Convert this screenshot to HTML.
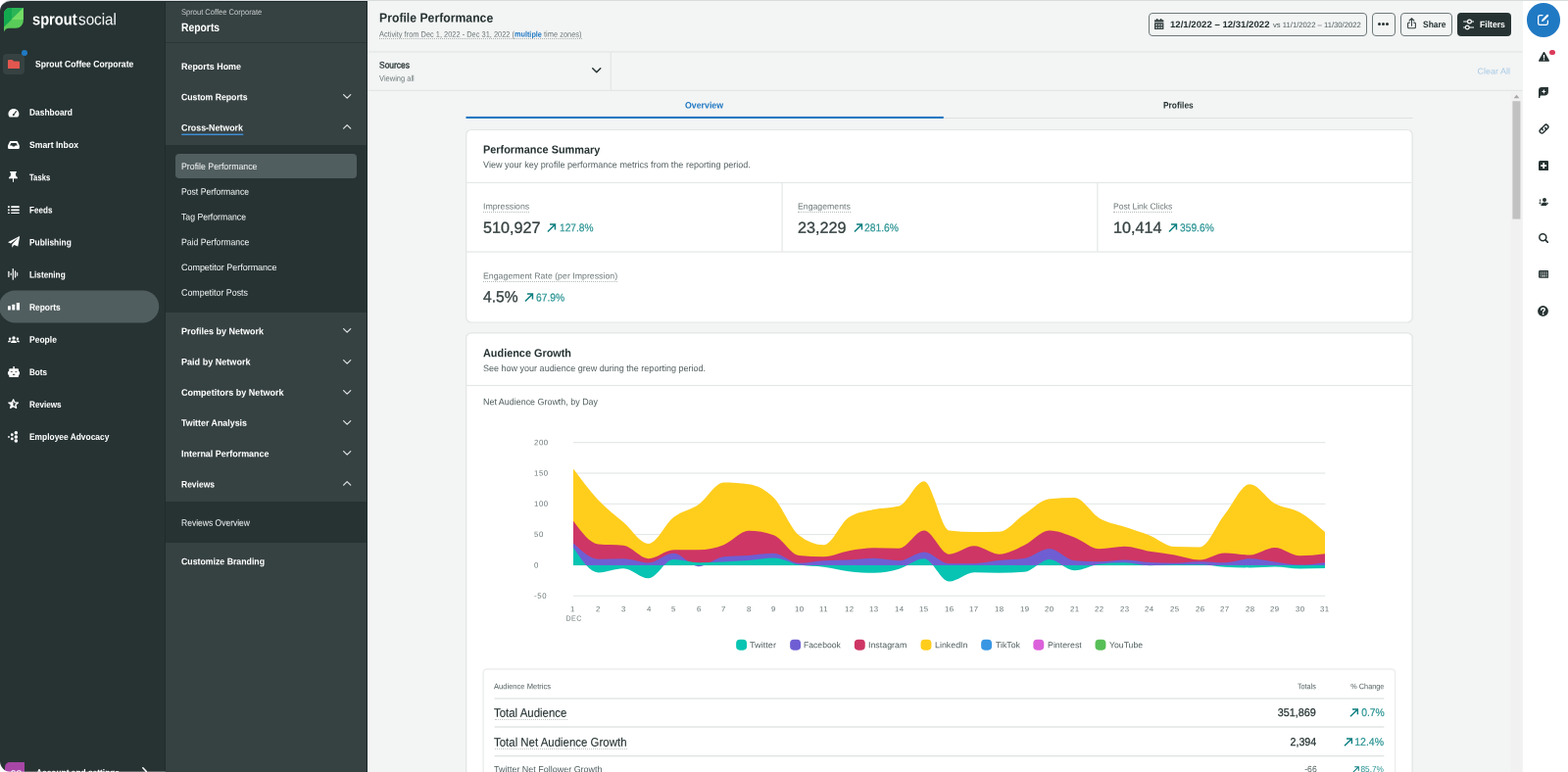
<!DOCTYPE html>
<html lang="en"><head><meta charset="utf-8"><title>Profile Performance - Sprout Social</title>
<style>
html,body{margin:0;padding:0;background:#fff;}
body{width:1600px;height:788px;overflow:hidden;font-family:"Liberation Sans",sans-serif;text-rendering:geometricPrecision;}
#app{position:absolute;left:0;top:0;width:1600px;height:788px;overflow:hidden;border-radius:11px 0 0 11px;border-top:1px solid #d9dcdc;box-sizing:border-box;}
#in{will-change:transform;position:absolute;left:0;top:-1px;width:1600px;height:788px;}
#in nav,#in main,#in aside,#in section{display:contents;}
#in div,#in span,#in svg{position:absolute;display:block;}
#in span{white-space:nowrap;}
</style></head><body>
<div id="app"><div id="in">
<nav aria-label="Primary">
<div style="left:0px;top:0px;width:169px;height:788px;background:#273333;"></div>
<div style="left:168px;top:0px;width:1px;height:788px;background:#212b2c;"></div>
<svg style="left:3.9px;top:8px" width="19.8" height="24.5" viewBox="0 0 20 24.5"><path d="M6.500 0H20V13C20 17.400 16.600 20.800 12.200 20.800H5.400C2.700 20.800 0.900 22.300 0 24.500V6.500C0 2.900 2.900 0 6.500 0Z" fill="#59cb59"/><path d="M6.500 0H20L0 19.500V6.500C0 2.900 2.900 0 6.500 0Z" fill="#2bb656"/><path d="M6.500 0H8L8 11.700L0 19.500V6.500C0 2.900 2.900 0 6.500 0Z" fill="#13a94f"/><path d="M20 0V12H7.700Z" fill="#75dd66"/></svg>
<span style="top:9px;font-size:16.5px;line-height:22px;color:#fff;font-weight:700;left:33.20px;transform-origin:0 50%;transform:matrix(0.8881,0.0005,0,1,0,0.27);">sprout</span>
<span style="top:9px;font-size:16.5px;line-height:22px;color:#f4f5f5;left:80.00px;transform-origin:0 50%;transform:matrix(0.9244,0.0005,0,1,0,0.27);">social</span>
<div style="left:3px;top:54.5px;width:22px;height:21.5px;background:#364141;border-radius:4px;"></div>
<svg style="left:7.8px;top:60.7px" width="12" height="9.5" viewBox="0 0 12 9.5"><path d="M1.2 0H4.6L6 1.4H10.8C11.5 1.4 12 1.9 12 2.6V8.3C12 9 11.5 9.5 10.8 9.5H1.2C0.5 9.5 0 9 0 8.3V1.2C0 0.5 0.5 0 1.2 0Z" fill="#e2574f"/></svg>
<div style="left:21.5px;top:50.5px;width:6px;height:6px;background:#2079c3;border-radius:50%;"></div>
<span style="top:58px;font-size:9.5px;line-height:15px;color:#fff;font-weight:700;left:35.80px;transform-origin:0 50%;transform:matrix(0.9049,0.0005,0,1,0,0.56);">Sprout Coffee Corporate</span>
<svg style="left:0;top:290px" width="170" height="46" viewBox="0 290 170 46"><rect x="-1" y="296.4" width="163.2" height="33" rx="16.5" fill="#515e5f"/></svg>
<svg style="left:7.85px;top:110.70px;overflow:visible;" width="11.9" height="8.5" viewBox="0 0 12.6 9.8"><path d="M0.9 9.3C0.3 8.4 0 7.400 0 6.3C0 2.800 2.8 0 6.3 0S12.6 2.800 12.6 6.3C12.6 7.400 12.3 8.4 11.7 9.3C11.500 9.600 11.2 9.800 10.8 9.800H1.800C1.400 9.800 1.100 9.600 0.900 9.300Z" fill="#fff"/><path d="M9.200 3L6.600 6.700" stroke="#273333" stroke-width="1.200" stroke-linecap="round"/><circle cx="6.100" cy="7.100" r="1.150" fill="#273333"/></svg>
<span style="top:106px;font-size:9.4px;line-height:15px;color:#fff;font-weight:700;left:29.90px;transform-origin:0 50%;transform:matrix(0.8985,0.0005,0,1,0,0.83);">Dashboard</span>
<svg style="left:7.85px;top:143.85px;" width="11.9" height="8.1" viewBox="0 0 12.4 8.5"><path d="M3 0H9.400C9.900 0 10.300 0.300 10.500 0.700L12.200 4.400C12.300 4.700 12.400 5 12.400 5.300V7.200C12.400 7.900 11.800 8.500 11.100 8.500H1.300C0.600 8.500 0 7.900 0 7.200V5.300C0 5 0.100 4.700 0.200 4.400L1.900 0.700C2.100 0.300 2.500 0 3 0Z" fill="#fff"/><path d="M3.500 2.100H8.900L10.400 4.700H8L7.300 5.900H5.100L4.400 4.700H2Z" fill="#273333"/></svg>
<span style="top:140px;font-size:9.4px;line-height:15px;color:#fff;font-weight:700;left:29.90px;transform-origin:0 50%;transform:matrix(0.9227,0.0005,0,1,0,0.03);">Smart Inbox</span>
<svg style="left:9.10px;top:175.00px;" width="9" height="11.2" viewBox="0 0 9 11.2"><path d="M1.2 0H7.8V1.4H6.9L7.3 4.7C8.4 5.2 9 6.1 9 7.3H5V10.4L4.5 11.2L4 10.4V7.3H0C0 6.1 0.6 5.2 1.7 4.7L2.1 1.4H1.2Z" fill="#fff"/></svg>
<span style="top:173px;font-size:9.4px;line-height:15px;color:#fff;font-weight:700;left:29.90px;transform-origin:0 50%;transform:matrix(0.8188,0.0005,0,1,0,0.33);">Tasks</span>
<svg style="left:7.90px;top:209.65px;" width="11.8" height="8.7" viewBox="0 0 11.8 8.7"><rect x="0" y="0.3" width="1.8" height="1.7" rx="0.3" fill="#fff"/><rect x="3.2" y="0.35" width="8.6" height="1.6" rx="0.4" fill="#fff"/><rect x="0" y="3.5" width="1.8" height="1.7" rx="0.3" fill="#fff"/><rect x="3.2" y="3.55" width="8.6" height="1.6" rx="0.4" fill="#fff"/><rect x="0" y="6.7" width="1.8" height="1.7" rx="0.3" fill="#fff"/><rect x="3.2" y="6.75" width="8.6" height="1.6" rx="0.4" fill="#fff"/></svg>
<span style="top:206px;font-size:9.4px;line-height:15px;color:#fff;font-weight:700;left:29.90px;transform-origin:0 50%;transform:matrix(0.8632,0.0005,0,1,0,0.53);">Feeds</span>
<svg style="left:7.80px;top:241.25px;" width="12.2" height="11.7" viewBox="0 0 12.2 11.7"><path d="M12.2 0L10.3 10.6L6.4 8.9L4.3 11.7L4.3 8.4L10.6 1.6L3 7.5L0 6.3Z" fill="#fff"/></svg>
<span style="top:239px;font-size:9.4px;line-height:15px;color:#fff;font-weight:700;left:29.90px;transform-origin:0 50%;transform:matrix(0.8931,0.0005,0,1,0,0.43);">Publishing</span>
<svg style="left:8.20px;top:274.30px;" width="10.6" height="11.8" viewBox="0 0 10.6 11.8"><rect x="0.25" y="2.7" width="1.3" height="6.3999999999999995" rx="0.6" fill="#fff" opacity="0.95"/><rect x="2.5500000000000003" y="4.6" width="1.3" height="2.6000000000000005" rx="0.6" fill="#fff" opacity="0.8"/><rect x="4.6499999999999995" y="0" width="1.3" height="11.8" rx="0.6" fill="#fff" opacity="0.95"/><rect x="6.949999999999999" y="2.3" width="1.3" height="7.2" rx="0.6" fill="#fff" opacity="0.95"/><rect x="8.95" y="4" width="1.3" height="3.8" rx="0.6" fill="#fff" opacity="0.8"/></svg>
<span style="top:272px;font-size:9.4px;line-height:15px;color:#fff;font-weight:700;left:29.90px;transform-origin:0 50%;transform:matrix(0.8807,0.0005,0,1,0,0.43);">Listening</span>
<svg style="left:7.65px;top:309.40px;" width="12.1" height="7.6" viewBox="0 0 12.1 7.6"><rect x="0" y="3.3" width="2.9" height="4.3" rx="0.5" fill="#fff"/><rect x="4.3" y="1.7" width="2.9" height="5.9" rx="0.5" fill="#fff"/><rect x="8.8" y="0" width="3.3" height="7.6" rx="0.5" fill="#fff"/></svg>
<span style="top:305px;font-size:9.4px;line-height:15px;color:#fff;font-weight:700;left:29.90px;transform-origin:0 50%;transform:matrix(0.8949,0.0005,0,1,0,0.63);">Reports</span>
<svg style="left:7.70px;top:342.65px;" width="12" height="7.3" viewBox="0 0 12 7.3"><circle cx="6" cy="2" r="1.7" fill="#fff"/><circle cx="2.1" cy="2.8" r="1.2" fill="#fff"/><circle cx="9.9" cy="2.8" r="1.2" fill="#fff"/><path d="M3 7.3C3 5.4 4.2 4.3 6 4.3S9 5.4 9 7.3Z" fill="#fff"/><path d="M0 6.3C0 5 0.8 4.4 2.1 4.4C2.6 4.4 3 4.5 3.3 4.7C2.7 5.2 2.4 5.7 2.3 6.3Z" fill="#fff"/><path d="M12 6.3C12 5 11.2 4.4 9.9 4.4C9.4 4.4 9 4.5 8.7 4.7C9.3 5.2 9.6 5.7 9.7 6.3Z" fill="#fff"/></svg>
<span style="top:338px;font-size:9.4px;line-height:15px;color:#fff;font-weight:700;left:29.90px;transform-origin:0 50%;transform:matrix(0.9073,0.0005,0,1,0,0.83);">People</span>
<svg style="left:7.70px;top:374.30px;" width="12.2" height="11.2" viewBox="0 0 12.2 11.2"><rect x="5.4" y="0" width="1.4" height="3" fill="#fff"/><path d="M2.4 2.3H9.8C10.5 2.3 11 2.8 11 3.5V5.2H12.2V8.6H11V10C11 10.7 10.5 11.2 9.8 11.2H2.4C1.7 11.2 1.2 10.7 1.2 10V8.600H0V5.2H1.2V3.5C1.2 2.8 1.7 2.3 2.4 2.3Z" fill="#fff"/><rect x="2.7" y="5" width="2.2" height="1" rx="0.4" fill="#273333" opacity="0.75"/><rect x="7.3" y="5" width="2.2" height="1" rx="0.4" fill="#273333" opacity="0.75"/><rect x="4.9" y="7.8" width="2.4" height="1.2" rx="0.5" fill="#273333" opacity="0.8"/></svg>
<span style="top:371px;font-size:9.4px;line-height:15px;color:#fff;font-weight:700;left:29.90px;transform-origin:0 50%;transform:matrix(0.8636,0.0005,0,1,0,0.93);">Bots</span>
<svg style="left:7.95px;top:406.90px;" width="11.3" height="10.5" viewBox="0 0 11.6 11.4" preserveAspectRatio="none"><path d="M5.80,0.70L7.30,3.94L10.84,4.36L8.23,6.79L8.92,10.29L5.80,8.55L2.68,10.29L3.37,6.79L0.76,4.36L4.30,3.94Z" fill="#fff" stroke="#fff" stroke-width="1.1" stroke-linejoin="round"/><path d="M5.80,3.00L6.59,4.91L8.65,5.07L7.08,6.42L7.56,8.43L5.80,7.35Z" fill="#273333" stroke="#273333" stroke-width="0.3" stroke-linejoin="round"/></svg>
<span style="top:404px;font-size:9.4px;line-height:15px;color:#fff;font-weight:700;left:29.90px;transform-origin:0 50%;transform:matrix(0.8686,0.0005,0,1,0,0.93);">Reviews</span>
<svg style="left:8.35px;top:440.00px;" width="10.1" height="11.8" viewBox="0 0 10.1 11.8"><circle cx="8.3" cy="1.8" r="1.75" fill="#fff"/><circle cx="8.3" cy="5.9" r="1.75" fill="#fff"/><circle cx="8.3" cy="10" r="1.75" fill="#fff"/><circle cx="4.3" cy="3.8" r="1.45" fill="#fff"/><circle cx="4.3" cy="7.9" r="1.45" fill="#fff"/><circle cx="1" cy="5.9" r="0.95" fill="#fff"/></svg>
<span style="top:438px;font-size:9.4px;line-height:15px;color:#fff;font-weight:700;left:29.90px;transform-origin:0 50%;transform:matrix(0.8949,0.0005,0,1,0,0.03);">Employee Advocacy</span>
<div style="left:5px;top:778px;width:19.5px;height:20px;background:#a746a6;border-radius:5px 0 0 0;"></div>
<span style="top:782px;font-size:8.0px;line-height:13px;color:#fff;font-weight:700;left:11.00px;transform-origin:0 50%;transform:matrix(1.0000,0.0005,0,1,0,0.75);">SC</span>
<span style="top:780px;font-size:9.4px;line-height:15px;color:#fff;font-weight:700;left:37.00px;transform-origin:0 50%;transform:matrix(0.8917,0.0005,0,1,0,0.83);">Account and settings</span>
<svg style="left:145.20px;top:783.00px;overflow:visible;" width="5.2" height="9" viewBox="0 0 5.2 9"><path d="M0.8 0.8L4.4 4.5L0.8 8.2" fill="none" stroke="#fff" stroke-width="1.5" stroke-linecap="round" stroke-linejoin="round"/></svg>
<div style="left:0px;top:787px;width:375px;height:1px;background:rgba(255,255,255,0.28);"></div>
</nav>
<nav aria-label="Reports">
<div style="left:169px;top:0px;width:206px;height:788px;background:#364141;"></div>
<div style="left:169px;top:43px;width:206px;height:1px;background:#2a3636;"></div>
<div style="left:374px;top:0px;width:1px;height:788px;background:#1b2a2b;"></div>
<div style="left:0px;top:1px;width:375px;height:1px;background:#1d2b2c;"></div>
<span style="top:6px;font-size:8.2px;line-height:13px;color:#c8cccc;left:184.80px;transform-origin:0 50%;transform:matrix(0.9229,0.0005,0,1,0,0.02);">Sprout Coffee Corporate</span>
<span style="top:19px;font-size:12.0px;line-height:18px;color:#fff;font-weight:700;left:184.80px;transform-origin:0 50%;transform:matrix(0.8623,0.0005,0,1,0,0.02);">Reports</span>
<div style="left:169px;top:148px;width:205px;height:171px;background:#273333;"></div>
<div style="left:169px;top:512px;width:205px;height:42px;background:#273333;"></div>
<div style="left:179px;top:157px;width:185px;height:25px;background:#515e5f;border-radius:4px;"></div>
<span style="top:60px;font-size:9.4px;line-height:15px;color:#fff;font-weight:700;left:185.00px;transform-origin:0 50%;transform:matrix(0.9520,0.0005,0,1,0,0.03);">Reports Home</span>
<span style="top:91px;font-size:9.4px;line-height:15px;color:#fff;font-weight:700;left:185.00px;transform-origin:0 50%;transform:matrix(0.9256,0.0005,0,1,0,0.23);">Custom Reports</span>
<svg style="left:349.80px;top:96.30px;overflow:visible;" width="8.4" height="4.8" viewBox="0 0 8.4 4.8"><path d="M0.625 0.625L4.2 4.175L7.775 0.625" fill="none" stroke="#dfe2e2" stroke-width="1.25" stroke-linecap="round" stroke-linejoin="round"/></svg>
<span style="top:122px;font-size:9.4px;line-height:15px;color:#fff;font-weight:700;left:185.00px;transform-origin:0 50%;transform:matrix(0.9447,0.0005,0,1,0,0.43);">Cross-Network</span>
<svg style="left:349.80px;top:127.30px;overflow:visible;" width="8.4" height="4.8" viewBox="0 0 8.4 4.8"><path d="M0.625 4.175L4.2 0.625L7.775 4.175" fill="none" stroke="#dfe2e2" stroke-width="1.25" stroke-linecap="round" stroke-linejoin="round"/></svg>
<span style="top:330px;font-size:9.4px;line-height:15px;color:#fff;font-weight:700;left:185.00px;transform-origin:0 50%;transform:matrix(0.9597,0.0005,0,1,0,0.13);">Profiles by Network</span>
<svg style="left:349.80px;top:335.20px;overflow:visible;" width="8.4" height="4.8" viewBox="0 0 8.4 4.8"><path d="M0.625 0.625L4.2 4.175L7.775 0.625" fill="none" stroke="#dfe2e2" stroke-width="1.25" stroke-linecap="round" stroke-linejoin="round"/></svg>
<span style="top:361px;font-size:9.4px;line-height:15px;color:#fff;font-weight:700;left:185.00px;transform-origin:0 50%;transform:matrix(0.9666,0.0005,0,1,0,0.43);">Paid by Network</span>
<svg style="left:349.80px;top:366.50px;overflow:visible;" width="8.4" height="4.8" viewBox="0 0 8.4 4.8"><path d="M0.625 0.625L4.2 4.175L7.775 0.625" fill="none" stroke="#dfe2e2" stroke-width="1.25" stroke-linecap="round" stroke-linejoin="round"/></svg>
<span style="top:392px;font-size:9.4px;line-height:15px;color:#fff;font-weight:700;left:185.00px;transform-origin:0 50%;transform:matrix(0.9644,0.0005,0,1,0,0.63);">Competitors by Network</span>
<svg style="left:349.80px;top:397.70px;overflow:visible;" width="8.4" height="4.8" viewBox="0 0 8.4 4.8"><path d="M0.625 0.625L4.2 4.175L7.775 0.625" fill="none" stroke="#dfe2e2" stroke-width="1.25" stroke-linecap="round" stroke-linejoin="round"/></svg>
<span style="top:423px;font-size:9.4px;line-height:15px;color:#fff;font-weight:700;left:185.00px;transform-origin:0 50%;transform:matrix(0.9455,0.0005,0,1,0,0.83);">Twitter Analysis</span>
<svg style="left:349.80px;top:428.90px;overflow:visible;" width="8.4" height="4.8" viewBox="0 0 8.4 4.8"><path d="M0.625 0.625L4.2 4.175L7.775 0.625" fill="none" stroke="#dfe2e2" stroke-width="1.25" stroke-linecap="round" stroke-linejoin="round"/></svg>
<span style="top:455px;font-size:9.4px;line-height:15px;color:#fff;font-weight:700;left:185.00px;transform-origin:0 50%;transform:matrix(0.9542,0.0005,0,1,0,0.13);">Internal Performance</span>
<svg style="left:349.80px;top:460.20px;overflow:visible;" width="8.4" height="4.8" viewBox="0 0 8.4 4.8"><path d="M0.625 0.625L4.2 4.175L7.775 0.625" fill="none" stroke="#dfe2e2" stroke-width="1.25" stroke-linecap="round" stroke-linejoin="round"/></svg>
<span style="top:486px;font-size:9.4px;line-height:15px;color:#fff;font-weight:700;left:185.00px;transform-origin:0 50%;transform:matrix(0.9059,0.0005,0,1,0,0.43);">Reviews</span>
<svg style="left:349.80px;top:491.30px;overflow:visible;" width="8.4" height="4.8" viewBox="0 0 8.4 4.8"><path d="M0.625 4.175L4.2 0.625L7.775 4.175" fill="none" stroke="#dfe2e2" stroke-width="1.25" stroke-linecap="round" stroke-linejoin="round"/></svg>
<span style="top:565px;font-size:9.4px;line-height:15px;color:#fff;font-weight:700;left:185.00px;transform-origin:0 50%;transform:matrix(0.9325,0.0005,0,1,0,0.33);">Customize Branding</span>
<span style="top:161px;font-size:9.4px;line-height:15px;color:#f2f4f4;left:185.00px;transform-origin:0 50%;transform:matrix(0.9353,0.0005,0,1,0,0.93);">Profile Performance</span>
<span style="top:187px;font-size:9.4px;line-height:15px;color:#f2f4f4;left:185.00px;transform-origin:0 50%;transform:matrix(0.9194,0.0005,0,1,0,0.63);">Post Performance</span>
<span style="top:213px;font-size:9.4px;line-height:15px;color:#f2f4f4;left:185.00px;transform-origin:0 50%;transform:matrix(0.9245,0.0005,0,1,0,0.43);">Tag Performance</span>
<span style="top:239px;font-size:9.4px;line-height:15px;color:#f2f4f4;left:185.00px;transform-origin:0 50%;transform:matrix(0.9234,0.0005,0,1,0,0.13);">Paid Performance</span>
<span style="top:264px;font-size:9.4px;line-height:15px;color:#f2f4f4;left:185.00px;transform-origin:0 50%;transform:matrix(0.9547,0.0005,0,1,0,0.93);">Competitor Performance</span>
<span style="top:290px;font-size:9.4px;line-height:15px;color:#f2f4f4;left:185.00px;transform-origin:0 50%;transform:matrix(0.9457,0.0005,0,1,0,0.63);">Competitor Posts</span>
<span style="top:525px;font-size:9.4px;line-height:15px;color:#f2f4f4;left:185.00px;transform-origin:0 50%;transform:matrix(0.9078,0.0005,0,1,0,0.63);">Reviews Overview</span>
</nav>
<main>
<div style="left:375px;top:0px;width:1178.5px;height:788px;background:#f3f4f4;"></div>
<svg style="left:0;top:0" width="1600" height="788" viewBox="0 0 1600 788"><rect x="185.3" y="136.55" width="63.00" height="1.5" fill="#3e8ed6"/><rect x="375" y="52.25" width="1178.50" height="1.3" fill="#e3e6e6"/><rect x="375" y="91.80" width="1178.50" height="1.2" fill="#e3e6e6"/><rect x="622.70" y="53" width="1.2" height="39.00" fill="#e3e6e6"/><rect x="475.5" y="120.00" width="966.00" height="1" fill="#dfe2e2"/><rect x="475.5" y="118.90" width="487.30" height="2.1" fill="#2079c3"/><rect x="1541.5" y="93" width="12" height="695" fill="#f1f1f1"/><rect x="1543.4" y="103.2" width="8" height="120.4" fill="#c1c1c1"/><rect x="475.75" y="132.5" width="965.35" height="196.50" rx="5" fill="#fff" stroke="#e2e5e5" stroke-width="1.2"/><rect x="476.2" y="185.85" width="964.40" height="1.2" fill="#e4e7e7"/><rect x="476.2" y="256.50" width="964.40" height="1.2" fill="#e4e7e7"/><rect x="797.50" y="187" width="1.2" height="69.60" fill="#e4e7e7"/><rect x="1119.30" y="187" width="1.2" height="69.60" fill="#e4e7e7"/><rect x="475.75" y="339.8" width="965.35" height="460.20" rx="5" fill="#fff" stroke="#e2e5e5" stroke-width="1.2"/><rect x="476.2" y="392.90" width="964.40" height="1.2" fill="#e4e7e7"/><rect x="585.0" y="451.15" width="767.40" height="1.1" fill="#e3e6e6"/><rect x="585.0" y="482.45" width="767.40" height="1.1" fill="#e3e6e6"/><rect x="585.0" y="513.75" width="767.40" height="1.1" fill="#e3e6e6"/><rect x="585.0" y="545.05" width="767.40" height="1.1" fill="#e3e6e6"/><rect x="585.0" y="576.35" width="767.40" height="1.1" fill="#e3e6e6"/><rect x="585.0" y="607.65" width="767.40" height="1.1" fill="#e3e6e6"/><rect x="751.15" y="652.75" width="10.9" height="10.9" rx="3.8" fill="#08c4b2"/><rect x="806.15" y="652.75" width="10.9" height="10.9" rx="3.8" fill="#6f5ed3"/><rect x="871.85" y="652.75" width="10.9" height="10.9" rx="3.8" fill="#ce3665"/><rect x="939.55" y="652.75" width="10.9" height="10.9" rx="3.8" fill="#ffcd1c"/><rect x="1001.15" y="652.75" width="10.9" height="10.9" rx="3.8" fill="#3896e3"/><rect x="1054.3500000000001" y="652.75" width="10.9" height="10.9" rx="3.8" fill="#db61db"/><rect x="1117.5500000000002" y="652.75" width="10.9" height="10.9" rx="3.8" fill="#57bf57"/><rect x="493.1" y="683.0" width="930.50" height="127.00" rx="3.5" fill="#fff" stroke="#eceeee" stroke-width="1.4"/><rect x="504.5" y="712.40" width="907.80" height="1.2" fill="#dde0e0"/><rect x="504.5" y="741.40" width="907.80" height="1.2" fill="#dde0e0"/><rect x="504.5" y="771.10" width="907.80" height="1.2" fill="#dde0e0"/></svg>
<span style="top:8px;font-size:13.0px;line-height:19px;color:#273333;font-weight:700;left:387.00px;transform-origin:0 50%;transform:matrix(0.9405,0.0005,0,1,0,0.57);">Profile Performance</span>
<span style="top:28px;font-size:8.2px;line-height:13px;color:#6e797a;left:387.00px;transform-origin:0 50%;transform:matrix(0.9079,0.0005,0,1,0,0.62);">Activity from Dec 1, 2022 - Dec 31, 2022 (</span>
<span style="top:28px;font-size:8.2px;line-height:13px;color:#2079c3;font-weight:700;left:524.80px;transform-origin:0 50%;transform:matrix(0.8888,0.0005,0,1,0,0.62);">multiple</span>
<span style="top:28px;font-size:8.2px;line-height:13px;color:#6e797a;left:555.30px;transform-origin:0 50%;transform:matrix(0.9119,0.0005,0,1,0,0.62);">time zones)</span>
<div style="left:387px;top:39.3px;width:207px;height:0px;border-top:1px dotted #a9b0b0;"></div>
<span style="top:59px;font-size:9.3px;line-height:14px;color:#364141;left:386.70px;transform-origin:0 50%;transform:matrix(0.9088,0.0005,0,1,0,0.49);-webkit-text-stroke:0.4px #364141;">Sources</span>
<span style="top:73px;font-size:8.2px;line-height:13px;color:#6e797a;left:386.50px;transform-origin:0 50%;transform:matrix(0.9179,0.0005,0,1,0,0.82);">Viewing all</span>
<svg style="left:603.75px;top:69.25px;overflow:visible;" width="9.5" height="5.5" viewBox="0 0 9.5 5.5"><path d="M0.75 0.75L4.75 4.75L8.75 0.75" fill="none" stroke="#273333" stroke-width="1.5" stroke-linecap="round" stroke-linejoin="round"/></svg>
<span style="top:65px;font-size:8.6px;line-height:14px;color:#a9cbe6;left:1509.00px;transform-origin:100% 50%;transform:matrix(1.0469,0.0005,0,1,0,0.45);">Clear All</span>
<div style="left:1172px;top:13px;width:223px;height:23.5px;border:1px solid #6e797a;border-radius:4px;box-sizing:border-box;"></div>
<svg style="left:1178.30px;top:18.80px;" width="9.4" height="11.4" viewBox="0 0 9.4 11.4"><rect x="2" y="0" width="1.5" height="2.4" rx="0.5" fill="#364141"/><rect x="5.9" y="0" width="1.5" height="2.4" rx="0.5" fill="#364141"/><path d="M1 1.3H8.4C9 1.3 9.4 1.7 9.4 2.3V3.6H0V2.3C0 1.7 0.4 1.3 1 1.3Z" fill="#364141"/><path d="M0 4.3H9.4V10.4C9.4 11 9 11.400 8.400 11.4H1C0.4 11.4 0 11 0 10.4Z" fill="#364141"/><g fill="#dfe2e2"><rect x="1.3" y="5.8" width="1.6" height="1.3"/><rect x="3.9" y="5.8" width="1.6" height="1.3"/><rect x="6.5" y="5.8" width="1.6" height="1.3"/><rect x="1.3" y="8.5" width="1.6" height="1.3"/><rect x="3.9" y="8.5" width="1.6" height="1.3"/><rect x="6.5" y="8.5" width="1.6" height="1.3"/></g></svg>
<span style="top:17px;font-size:9.2px;line-height:14px;color:#273333;font-weight:700;left:1194.30px;transform-origin:0 50%;transform:matrix(1.0455,0.0005,0,1,0,0.96);">12/1/2022 – 12/31/2022</span>
<span style="top:18px;font-size:7.8px;line-height:13px;color:#515e5f;left:1298.50px;transform-origin:0 50%;transform:matrix(0.9848,0.0005,0,1,0,0.88);">vs 11/1/2022 – 11/30/2022</span>
<div style="left:1400px;top:13px;width:23.5px;height:23.5px;border:1px solid #6e797a;border-radius:4px;box-sizing:border-box;"></div>
<div style="left:1405.9499999999998px;top:23.3px;width:3px;height:3px;background:#273333;border-radius:50%;"></div>
<div style="left:1410.1px;top:23.3px;width:3px;height:3px;background:#273333;border-radius:50%;"></div>
<div style="left:1414.25px;top:23.3px;width:3px;height:3px;background:#273333;border-radius:50%;"></div>
<div style="left:1429px;top:13px;width:52.8px;height:23.5px;border:1px solid #6e797a;border-radius:4px;box-sizing:border-box;"></div>
<svg style="left:1436.00px;top:18.30px;" width="9" height="11.4" viewBox="0 0 9 11.4"><path d="M2.3 5.1H1.6C1 5.1 0.6 5.5 0.6 6.1V9.8C0.6 10.4 1 10.8 1.6 10.8H7.4C8 10.8 8.4 10.4 8.4 9.8V6.1C8.4 5.500 8 5.1 7.400 5.1H6.7" fill="none" stroke="#364141" stroke-width="1.1" stroke-linecap="round"/><path d="M4.5 8.2V0.9M2.2 3L4.5 0.7L6.8 3" fill="none" stroke="#364141" stroke-width="1.1" stroke-linecap="round" stroke-linejoin="round"/></svg>
<span style="top:17px;font-size:9.2px;line-height:14px;color:#273333;font-weight:700;left:1451.80px;transform-origin:0 50%;transform:matrix(0.9199,0.0005,0,1,0,0.96);">Share</span>
<div style="left:1487px;top:13px;width:54.5px;height:23.5px;background:#273333;border-radius:4px;"></div>
<svg style="left:1492.90px;top:18.60px;" width="11.2" height="12" viewBox="0 0 11.2 12"><path d="M0.6 3H4.4M8.6 3H10.6M0.6 9H2.2M6.4 9H10.6" stroke="#fff" stroke-width="1.2" stroke-linecap="round"/><circle cx="6.5" cy="3" r="1.9" fill="none" stroke="#fff" stroke-width="1.2"/><circle cx="4.3" cy="9" r="1.9" fill="none" stroke="#fff" stroke-width="1.2"/></svg>
<span style="top:17px;font-size:9.2px;line-height:14px;color:#fff;font-weight:700;left:1509.80px;transform-origin:0 50%;transform:matrix(0.9355,0.0005,0,1,0,0.96);">Filters</span>
<span style="top:100px;font-size:9.3px;line-height:14px;color:#2079c3;font-weight:700;left:699.40px;transform-origin:0 50%;transform:matrix(0.9454,0.0005,0,1,0,0.49);">Overview</span>
<span style="top:100px;font-size:9.3px;line-height:14px;color:#273333;font-weight:700;left:1186.50px;transform-origin:0 50%;transform:matrix(0.9030,0.0005,0,1,0,0.49);">Profiles</span>
<svg style="left:1544px;top:96px" width="7" height="5" viewBox="0 0 7 5"><path d="M3.5 0.8L6.3 4.2H0.7Z" fill="#a6a6a6"/></svg>
</main>
<aside aria-label="Utilities">
<div style="left:1553.5px;top:0px;width:46.5px;height:788px;background:#fff;"></div>
<div style="left:1557.6px;top:3px;width:34.6px;height:34.6px;background:#2079c3;border-radius:50%;"></div>
<svg style="left:1569.00px;top:14.20px;" width="12" height="12" viewBox="0 0 12 12"><path d="M5 1.6H2.600C1.5 1.600 0.6 2.5 0.6 3.600V9.400C0.6 10.5 1.500 11.4 2.600 11.4H8.400C9.500 11.4 10.400 10.5 10.400 9.400V7" fill="none" stroke="#fff" stroke-width="1.25" stroke-linecap="round"/><path d="M4 8L4.500 5.900L9.400 1C9.800 0.6 10.400 0.600 10.800 1L11 1.200C11.400 1.600 11.400 2.200 11 2.600L6.100 7.500Z" fill="#fff"/></svg>
<svg style="left:1569.50px;top:52.85px;overflow:visible;" width="11" height="9.7" viewBox="0 0 11 9.7"><path d="M4.75 0.55C5.1 -0.05 5.9 -0.05 6.25 0.55L10.85 8.4C11.2 9 10.75 9.7 10.1 9.7H0.9C0.25 9.7 -0.2 9 0.15 8.4Z" fill="#273333"/><rect x="4.85" y="3.1" width="1.3" height="3.5" rx="0.3" fill="#fff"/><rect x="4.85" y="7.3" width="1.3" height="1.25" rx="0.3" fill="#fff"/></svg>
<svg style="left:1570.10px;top:88.90px;" width="9.9" height="11.1" viewBox="0 0 9.9 11.1"><path d="M3 0H9.900V5C9.900 7 8.300 8.600 6.300 8.600H2.600C1.800 8.600 1.400 9.300 1.400 10.200V11.100H0V3C0 1.300 1.300 0 3 0Z" fill="#273333"/><path d="M5.300 1.900L6 3.700L7.800 4.400L6 5.100L5.300 6.900L4.600 5.100L2.800 4.400L4.600 3.700Z" fill="#fff"/></svg>
<svg style="left:1569.50px;top:125.80px;overflow:visible;" width="11" height="11.2" viewBox="0 0 11 11.2"><g fill="none" stroke="#273333" stroke-width="1.5" stroke-linecap="round" transform="rotate(-45 5.5 5.6)"><path d="M4.300 3.400H2.500C1.300 3.400 0.300 4.400 0.300 5.600S1.300 7.800 2.500 7.800H5C6.200 7.800 7.200 6.800 7.200 5.600"/><path d="M6.700 7.800H8.500C9.700 7.800 10.700 6.800 10.700 5.600S9.700 3.400 8.500 3.400H6C4.800 3.400 3.800 4.400 3.800 5.600"/></g></svg>
<svg style="left:1569.85px;top:163.75px;" width="10.3" height="10.3" viewBox="0 0 10.3 10.3"><rect x="0" y="0" width="10.3" height="10.3" rx="1.6" fill="#273333"/><path d="M5.150 2.200V8.100M2.200 5.150H8.100" stroke="#fff" stroke-width="1.8" stroke-linecap="butt"/></svg>
<svg style="left:1569.60px;top:201.80px;" width="10.6" height="8" viewBox="0 0 10.6 8"><circle cx="6" cy="2" r="2" fill="#273333"/><path d="M2.400 8C2.400 5.700 3.800 4.500 6 4.500C6.500 4.500 7 4.600 7.400 4.700L9 6.400L7.500 8Z" fill="#273333"/><path d="M8.300 4.300L10.600 5.600L8.300 6.900Z" fill="#273333" opacity="0.85"/><rect x="0.900" y="1.300" width="1.200" height="2.400" rx="0.600" fill="#273333" opacity="0.85"/><circle cx="1.500" cy="5.300" r="1.100" fill="#273333" opacity="0.85"/></svg>
<svg style="left:1569.70px;top:237.60px;" width="10.6" height="10.6" viewBox="0 0 10.6 10.6"><circle cx="4.300" cy="4.300" r="3.500" fill="none" stroke="#273333" stroke-width="1.5"/><path d="M6.900 6.900L9.700 9.700" stroke="#273333" stroke-width="1.700" stroke-linecap="round"/></svg>
<svg style="left:1569.80px;top:276.00px;" width="10.4" height="7.8" viewBox="0 0 10.4 7.8"><rect x="0" y="0" width="10.4" height="7.8" rx="1.3" fill="#273333"/><g fill="#fff" opacity="0.8"><rect x="1.300" y="1.500" width="1.100" height="1.000"/><rect x="3.100" y="1.500" width="1.100" height="1.000"/><rect x="4.700" y="1.500" width="1.100" height="1.000"/><rect x="6.300" y="1.500" width="1.100" height="1.000"/><rect x="8.000" y="1.500" width="1.100" height="1.000"/><rect x="1.300" y="3.400" width="1.100" height="1.000"/><rect x="3.100" y="3.400" width="1.100" height="1.000"/><rect x="4.700" y="3.400" width="1.100" height="1.000"/><rect x="6.300" y="3.400" width="1.100" height="1.000"/><rect x="8.000" y="3.400" width="1.100" height="1.000"/><rect x="3.000" y="5.300" width="4.400" height="1.100"/><rect x="1.300" y="5.300" width="1.000" height="1.100"/><rect x="8.100" y="5.300" width="1.000" height="1.100"/></g></svg>
<svg style="left:1569.45px;top:311.90px;" width="11" height="11" viewBox="0 0 11 11"><circle cx="5.500" cy="5.500" r="5.400" fill="#273333"/><path d="M3.700 4.200C3.700 3.100 4.500 2.500 5.500 2.500S7.300 3.100 7.300 4.100C7.300 5.300 5.600 5.400 5.600 6.700" fill="none" stroke="#fff" stroke-width="1.350" stroke-linecap="round"/><circle cx="5.600" cy="8.600" r="0.850" fill="#fff"/></svg>
<div style="left:1581.2px;top:50.8px;width:5.6px;height:5.6px;background:#dc3a5a;border-radius:50%;"></div>
</aside>
<section aria-label="Report">
<span style="top:145px;font-size:11.6px;line-height:16px;color:#273333;font-weight:700;left:492.70px;transform-origin:0 50%;transform:matrix(0.9397,0.0005,0,1,0,0.58);">Performance Summary</span>
<span style="top:161px;font-size:9.3px;line-height:14px;color:#566263;left:493.10px;transform-origin:0 50%;transform:matrix(0.9750,0.0005,0,1,0,0.19);">View your key profile performance metrics from the reporting period.</span>
<span style="top:203px;font-size:8.7px;line-height:14px;color:#6e797a;left:492.80px;transform-origin:0 50%;transform:matrix(1.0076,0.0005,0,1,0,0.49);">Impressions</span>
<div style="left:492.8px;top:216.3px;width:47.2px;height:0px;border-top:1px dotted #b4baba;"></div>
<span style="top:222px;font-size:16.0px;line-height:21px;color:#364141;left:492.80px;transform-origin:0 50%;transform:matrix(1.0096,0.0005,0,1,0,0.70);-webkit-text-stroke:0.3px #364141;">510,927</span>
<svg style="left:557.70px;top:227.90px;overflow:visible" width="9.4" height="9.4" viewBox="0 0 10 10"><path d="M1 9L9 1M3.2 1H9V6.8" fill="none" stroke="#0e7f80" stroke-width="1.60" stroke-linecap="butt" stroke-linejoin="miter"/></svg>
<span style="top:225px;font-size:11.3px;line-height:16px;color:#2a9393;left:570.80px;transform-origin:0 50%;transform:matrix(0.9001,0.0005,0,1,0,0.18);-webkit-text-stroke:0.2px #2a9393;">127.8%</span>
<span style="top:203px;font-size:8.7px;line-height:14px;color:#6e797a;left:814.40px;transform-origin:0 50%;transform:matrix(1.0033,0.0005,0,1,0,0.49);">Engagements</span>
<div style="left:814.4px;top:216.3px;width:53.8px;height:0px;border-top:1px dotted #b4baba;"></div>
<span style="top:222px;font-size:16.0px;line-height:21px;color:#364141;left:814.40px;transform-origin:0 50%;transform:matrix(1.0115,0.0005,0,1,0,0.70);-webkit-text-stroke:0.3px #364141;">23,229</span>
<svg style="left:870.70px;top:227.90px;overflow:visible" width="9.4" height="9.4" viewBox="0 0 10 10"><path d="M1 9L9 1M3.2 1H9V6.8" fill="none" stroke="#0e7f80" stroke-width="1.60" stroke-linecap="butt" stroke-linejoin="miter"/></svg>
<span style="top:225px;font-size:11.3px;line-height:16px;color:#2a9393;left:882.40px;transform-origin:0 50%;transform:matrix(0.9132,0.0005,0,1,0,0.18);-webkit-text-stroke:0.2px #2a9393;">281.6%</span>
<span style="top:203px;font-size:8.7px;line-height:14px;color:#6e797a;left:1135.50px;transform-origin:0 50%;transform:matrix(0.9816,0.0005,0,1,0,0.49);">Post Link Clicks</span>
<div style="left:1135.5px;top:216.3px;width:60.2px;height:0px;border-top:1px dotted #b4baba;"></div>
<span style="top:222px;font-size:16.0px;line-height:21px;color:#364141;left:1135.50px;transform-origin:0 50%;transform:matrix(1.0115,0.0005,0,1,0,0.70);-webkit-text-stroke:0.3px #364141;">10,414</span>
<svg style="left:1191.60px;top:227.90px;overflow:visible" width="9.4" height="9.4" viewBox="0 0 10 10"><path d="M1 9L9 1M3.2 1H9V6.8" fill="none" stroke="#0e7f80" stroke-width="1.60" stroke-linecap="butt" stroke-linejoin="miter"/></svg>
<span style="top:225px;font-size:11.3px;line-height:16px;color:#2a9393;left:1204.00px;transform-origin:0 50%;transform:matrix(0.9079,0.0005,0,1,0,0.18);-webkit-text-stroke:0.2px #2a9393;">359.6%</span>
<span style="top:274px;font-size:8.7px;line-height:14px;color:#6e797a;left:492.80px;transform-origin:0 50%;transform:matrix(1.0104,0.0005,0,1,0,0.49);">Engagement Rate (per Impression)</span>
<div style="left:492.8px;top:287.3px;width:137.1px;height:0px;border-top:1px dotted #b4baba;"></div>
<span style="top:293px;font-size:16.0px;line-height:21px;color:#364141;left:492.80px;transform-origin:0 50%;transform:matrix(0.9762,0.0005,0,1,0,0.20);-webkit-text-stroke:0.3px #364141;">4.5%</span>
<svg style="left:535.20px;top:299.20px;overflow:visible" width="9.4" height="9.4" viewBox="0 0 10 10"><path d="M1 9L9 1M3.2 1H9V6.8" fill="none" stroke="#0e7f80" stroke-width="1.60" stroke-linecap="butt" stroke-linejoin="miter"/></svg>
<span style="top:296px;font-size:11.3px;line-height:16px;color:#2a9393;left:547.40px;transform-origin:0 50%;transform:matrix(0.9112,0.0005,0,1,0,0.48);-webkit-text-stroke:0.2px #2a9393;">67.9%</span>
<span style="top:353px;font-size:11.6px;line-height:16px;color:#273333;font-weight:700;left:492.70px;transform-origin:0 50%;transform:matrix(0.9377,0.0005,0,1,0,0.28);">Audience Growth</span>
<span style="top:368px;font-size:9.3px;line-height:14px;color:#566263;left:493.10px;transform-origin:0 50%;transform:matrix(0.9696,0.0005,0,1,0,0.89);">See how your audience grew during the reporting period.</span>
<span style="top:403px;font-size:9.3px;line-height:14px;color:#515e5f;left:493.10px;transform-origin:0 50%;transform:matrix(0.9593,0.0005,0,1,0,0.19);">Net Audience Growth, by Day</span>
<span style="top:445px;font-size:7.8px;line-height:13px;color:#6e797a;left:544.80px;transform-origin:0 50%;transform:matrix(1.0000,0.0005,0,1,0,0.18);letter-spacing:0.6px;">200</span>
<span style="top:476px;font-size:7.8px;line-height:13px;color:#6e797a;left:544.80px;transform-origin:0 50%;transform:matrix(1.0000,0.0005,0,1,0,0.48);letter-spacing:0.6px;">150</span>
<span style="top:507px;font-size:7.8px;line-height:13px;color:#6e797a;left:544.80px;transform-origin:0 50%;transform:matrix(1.0000,0.0005,0,1,0,0.78);letter-spacing:0.6px;">100</span>
<span style="top:539px;font-size:7.8px;line-height:13px;color:#6e797a;left:544.80px;transform-origin:0 50%;transform:matrix(1.0000,0.0005,0,1,0,0.08);letter-spacing:0.6px;">50</span>
<span style="top:570px;font-size:7.8px;line-height:13px;color:#6e797a;left:544.80px;transform-origin:0 50%;transform:matrix(1.0000,0.0005,0,1,0,0.38);letter-spacing:0.6px;">0</span>
<span style="top:601px;font-size:7.8px;line-height:13px;color:#6e797a;left:544.80px;transform-origin:0 50%;transform:matrix(1.0000,0.0005,0,1,0,0.68);letter-spacing:0.6px;">-50</span>
<svg style="left:0;top:0" width="1600" height="788" viewBox="0 0 1600 788"><path d="M585.00,576.90L585.00,478.62C593.52,490.04,602.04,501.47,610.57,510.54C619.09,519.62,627.61,525.67,636.13,533.08C644.66,540.49,653.18,554.99,661.70,554.99C670.22,554.99,678.74,534.75,687.27,528.07C695.79,521.39,704.31,520.87,712.83,514.93C721.36,508.98,729.88,492.39,738.40,492.39C746.92,492.39,755.44,493.02,763.97,494.27C772.49,495.52,781.01,499.38,789.53,508.04C798.06,516.70,806.58,539.55,815.10,546.23C823.62,552.90,832.14,556.24,840.67,556.24C849.19,556.24,857.71,533.37,866.23,528.07C874.76,522.77,883.28,522.05,891.80,520.12C900.32,518.19,908.84,518.91,917.37,516.49C925.89,514.07,934.41,491.14,942.93,491.14C951.46,491.14,959.98,540.38,968.50,541.47C977.02,542.55,985.54,543.10,994.07,543.10C1002.59,543.10,1011.11,542.99,1019.63,542.78C1028.16,542.57,1036.68,530.52,1045.20,524.94C1053.72,519.36,1062.24,510.13,1070.77,509.29C1079.29,508.46,1087.81,508.04,1096.33,508.04C1104.86,508.04,1113.38,523.99,1121.90,528.95C1130.42,533.90,1138.94,534.86,1147.47,537.77C1155.99,540.69,1164.51,543.02,1173.03,546.41C1181.56,549.80,1190.08,557.91,1198.60,558.12C1207.12,558.33,1215.64,558.43,1224.17,558.43C1232.69,558.43,1241.21,535.64,1249.73,524.94C1258.26,514.25,1266.78,494.27,1275.30,494.27C1283.82,494.27,1292.34,509.19,1300.87,513.99C1309.39,518.79,1317.91,518.21,1326.43,523.06C1334.96,527.92,1343.48,535.51,1352.00,543.10L1352.00,576.90Z" fill="#ffcd1c"/><path d="M585.00,576.90L585.00,531.83C593.52,543.30,602.04,554.78,610.57,555.62C619.09,556.45,627.61,556.03,636.13,556.87C644.66,557.70,653.18,570.26,661.70,570.26C670.22,570.26,678.74,561.25,687.27,561.25C695.79,561.25,704.31,561.25,712.83,561.25C721.36,561.25,729.88,559.48,738.40,556.24C746.92,553.01,755.44,541.84,763.97,541.84C772.49,541.84,781.01,543.30,789.53,546.23C798.06,549.15,806.58,566.05,815.10,566.88C823.62,567.72,832.14,568.14,840.67,568.14C849.19,568.14,857.71,563.71,866.23,562.25C874.76,560.79,883.28,559.37,891.80,559.37C900.32,559.37,908.84,559.75,917.37,559.75C925.89,559.75,934.41,541.47,942.93,541.47C951.46,541.47,959.98,565.63,968.50,565.63C977.02,565.63,985.54,557.24,994.07,557.24C1002.59,557.24,1011.11,565.63,1019.63,565.63C1028.16,565.63,1036.68,560.46,1045.20,556.43C1053.72,552.40,1062.24,541.47,1070.77,541.47C1079.29,541.47,1087.81,545.29,1096.33,548.42C1104.86,551.55,1113.38,560.25,1121.90,560.25C1130.42,560.25,1138.94,557.74,1147.47,557.74C1155.99,557.74,1164.51,561.31,1173.03,562.75C1181.56,564.19,1190.08,564.94,1198.60,566.38C1207.12,567.82,1215.64,571.39,1224.17,571.39C1232.69,571.39,1241.21,564.38,1249.73,564.38C1258.26,564.38,1266.78,566.38,1275.30,566.38C1283.82,566.38,1292.34,558.93,1300.87,558.93C1309.39,558.93,1317.91,567.26,1326.43,567.26C1334.96,567.26,1343.48,566.26,1352.00,565.26L1352.00,576.90Z" fill="#ce3665"/><path d="M585.00,576.90L585.00,554.36C593.52,562.50,602.04,570.64,610.57,570.64C619.09,570.64,627.61,570.26,636.13,570.26C644.66,570.26,653.18,574.40,661.70,574.40C670.22,574.40,678.74,564.76,687.27,564.76C695.79,564.76,704.31,578.15,712.83,578.15C721.36,578.15,729.88,568.97,738.40,568.14C746.92,567.30,755.44,567.45,763.97,566.88C772.49,566.32,781.01,564.76,789.53,564.76C798.06,564.76,806.58,574.71,815.10,574.71C823.62,574.71,832.14,572.75,840.67,572.20C849.19,571.66,857.71,571.80,866.23,571.39C874.76,570.98,883.28,569.76,891.80,569.76C900.32,569.76,908.84,572.27,917.37,572.27C925.89,572.27,934.41,563.44,942.93,563.44C951.46,563.44,959.98,575.21,968.50,575.21C977.02,575.21,985.54,575.21,994.07,575.21C1002.59,575.21,1011.11,572.76,1019.63,571.89C1028.16,571.03,1036.68,571.27,1045.20,570.01C1053.72,568.76,1062.24,560.00,1070.77,560.00C1079.29,560.00,1087.81,571.58,1096.33,572.20C1104.86,572.83,1113.38,573.14,1121.90,573.14C1130.42,573.14,1138.94,571.39,1147.47,571.39C1155.99,571.39,1164.51,573.35,1173.03,573.90C1181.56,574.44,1190.08,574.71,1198.60,574.71C1207.12,574.71,1215.64,573.14,1224.17,573.14C1232.69,573.14,1241.21,574.21,1249.73,574.21C1258.26,574.21,1266.78,570.26,1275.30,570.26C1283.82,570.26,1292.34,572.53,1300.87,573.58C1309.39,574.64,1317.91,576.59,1326.43,576.59C1334.96,576.59,1343.48,575.40,1352.00,574.21L1352.00,576.90Z" fill="#6f5ed3"/><path d="M585.00,576.90L585.00,558.75C593.52,571.58,602.04,584.41,610.57,584.41C619.09,584.41,627.61,580.22,636.13,580.22C644.66,580.22,653.18,590.36,661.70,590.36C670.22,590.36,678.74,571.08,687.27,571.08C695.79,571.08,704.31,574.21,712.83,574.21C721.36,574.21,729.88,573.78,738.40,573.39C746.92,573.01,755.44,572.56,763.97,571.89C772.49,571.22,781.01,569.39,789.53,569.39C798.06,569.39,806.58,574.71,815.10,576.27C823.62,577.84,832.14,577.63,840.67,578.78C849.19,579.93,857.71,582.17,866.23,583.16C874.76,584.15,883.28,584.73,891.80,584.73C900.32,584.73,908.84,583.07,917.37,580.66C925.89,578.25,934.41,570.26,942.93,570.26C951.46,570.26,959.98,593.55,968.50,593.55C977.02,593.55,985.54,584.22,994.07,584.22C1002.59,584.22,1011.11,584.73,1019.63,584.73C1028.16,584.73,1036.68,584.41,1045.20,583.79C1053.72,583.16,1062.24,570.89,1070.77,570.89C1079.29,570.89,1087.81,582.22,1096.33,582.22C1104.86,582.22,1113.38,576.61,1121.90,575.65C1130.42,574.69,1138.94,574.21,1147.47,574.21C1155.99,574.21,1164.51,577.21,1173.03,577.21C1181.56,577.21,1190.08,576.27,1198.60,576.27C1207.12,576.27,1215.64,576.27,1224.17,576.27C1232.69,576.27,1241.21,578.36,1249.73,578.78C1258.26,579.20,1266.78,579.40,1275.30,579.40C1283.82,579.40,1292.34,578.40,1300.87,578.40C1309.39,578.40,1317.91,580.53,1326.43,580.53C1334.96,580.53,1343.48,580.28,1352.00,580.03L1352.00,576.90Z" fill="#08c4b2"/></svg>
<span style="top:615px;font-size:7.8px;line-height:13px;color:#6e797a;left:582.23px;transform-origin:2.17px 50%;transform:matrix(1.0000,0.0005,0,1,0,0.18);letter-spacing:0.5px;">1</span>
<span style="top:615px;font-size:7.8px;line-height:13px;color:#6e797a;left:608.39px;transform-origin:2.17px 50%;transform:matrix(1.0000,0.0005,0,1,0,0.18);letter-spacing:0.5px;">2</span>
<span style="top:615px;font-size:7.8px;line-height:13px;color:#6e797a;left:633.96px;transform-origin:2.17px 50%;transform:matrix(1.0000,0.0005,0,1,0,0.18);letter-spacing:0.5px;">3</span>
<span style="top:615px;font-size:7.8px;line-height:13px;color:#6e797a;left:659.53px;transform-origin:2.17px 50%;transform:matrix(1.0000,0.0005,0,1,0,0.18);letter-spacing:0.5px;">4</span>
<span style="top:615px;font-size:7.8px;line-height:13px;color:#6e797a;left:685.09px;transform-origin:2.17px 50%;transform:matrix(1.0000,0.0005,0,1,0,0.18);letter-spacing:0.5px;">5</span>
<span style="top:615px;font-size:7.8px;line-height:13px;color:#6e797a;left:710.66px;transform-origin:2.17px 50%;transform:matrix(1.0000,0.0005,0,1,0,0.18);letter-spacing:0.5px;">6</span>
<span style="top:615px;font-size:7.8px;line-height:13px;color:#6e797a;left:736.23px;transform-origin:2.17px 50%;transform:matrix(1.0000,0.0005,0,1,0,0.18);letter-spacing:0.5px;">7</span>
<span style="top:615px;font-size:7.8px;line-height:13px;color:#6e797a;left:761.79px;transform-origin:2.17px 50%;transform:matrix(1.0000,0.0005,0,1,0,0.18);letter-spacing:0.5px;">8</span>
<span style="top:615px;font-size:7.8px;line-height:13px;color:#6e797a;left:787.36px;transform-origin:2.17px 50%;transform:matrix(1.0000,0.0005,0,1,0,0.18);letter-spacing:0.5px;">9</span>
<span style="top:615px;font-size:7.8px;line-height:13px;color:#6e797a;left:810.51px;transform-origin:4.59px 50%;transform:matrix(1.0000,0.0005,0,1,0,0.18);letter-spacing:0.5px;">10</span>
<span style="top:615px;font-size:7.8px;line-height:13px;color:#6e797a;left:836.37px;transform-origin:4.30px 50%;transform:matrix(1.0000,0.0005,0,1,0,0.18);letter-spacing:0.5px;">11</span>
<span style="top:615px;font-size:7.8px;line-height:13px;color:#6e797a;left:861.64px;transform-origin:4.59px 50%;transform:matrix(1.0000,0.0005,0,1,0,0.18);letter-spacing:0.5px;">12</span>
<span style="top:615px;font-size:7.8px;line-height:13px;color:#6e797a;left:887.21px;transform-origin:4.59px 50%;transform:matrix(1.0000,0.0005,0,1,0,0.18);letter-spacing:0.5px;">13</span>
<span style="top:615px;font-size:7.8px;line-height:13px;color:#6e797a;left:912.77px;transform-origin:4.59px 50%;transform:matrix(1.0000,0.0005,0,1,0,0.18);letter-spacing:0.5px;">14</span>
<span style="top:615px;font-size:7.8px;line-height:13px;color:#6e797a;left:938.34px;transform-origin:4.59px 50%;transform:matrix(1.0000,0.0005,0,1,0,0.18);letter-spacing:0.5px;">15</span>
<span style="top:615px;font-size:7.8px;line-height:13px;color:#6e797a;left:963.91px;transform-origin:4.59px 50%;transform:matrix(1.0000,0.0005,0,1,0,0.18);letter-spacing:0.5px;">16</span>
<span style="top:615px;font-size:7.8px;line-height:13px;color:#6e797a;left:989.47px;transform-origin:4.59px 50%;transform:matrix(1.0000,0.0005,0,1,0,0.18);letter-spacing:0.5px;">17</span>
<span style="top:615px;font-size:7.8px;line-height:13px;color:#6e797a;left:1015.04px;transform-origin:4.59px 50%;transform:matrix(1.0000,0.0005,0,1,0,0.18);letter-spacing:0.5px;">18</span>
<span style="top:615px;font-size:7.8px;line-height:13px;color:#6e797a;left:1040.61px;transform-origin:4.59px 50%;transform:matrix(1.0000,0.0005,0,1,0,0.18);letter-spacing:0.5px;">19</span>
<span style="top:615px;font-size:7.8px;line-height:13px;color:#6e797a;left:1066.17px;transform-origin:4.59px 50%;transform:matrix(1.0000,0.0005,0,1,0,0.18);letter-spacing:0.5px;">20</span>
<span style="top:615px;font-size:7.8px;line-height:13px;color:#6e797a;left:1091.74px;transform-origin:4.59px 50%;transform:matrix(1.0000,0.0005,0,1,0,0.18);letter-spacing:0.5px;">21</span>
<span style="top:615px;font-size:7.8px;line-height:13px;color:#6e797a;left:1117.31px;transform-origin:4.59px 50%;transform:matrix(1.0000,0.0005,0,1,0,0.18);letter-spacing:0.5px;">22</span>
<span style="top:615px;font-size:7.8px;line-height:13px;color:#6e797a;left:1142.87px;transform-origin:4.59px 50%;transform:matrix(1.0000,0.0005,0,1,0,0.18);letter-spacing:0.5px;">23</span>
<span style="top:615px;font-size:7.8px;line-height:13px;color:#6e797a;left:1168.44px;transform-origin:4.59px 50%;transform:matrix(1.0000,0.0005,0,1,0,0.18);letter-spacing:0.5px;">24</span>
<span style="top:615px;font-size:7.8px;line-height:13px;color:#6e797a;left:1194.01px;transform-origin:4.59px 50%;transform:matrix(1.0000,0.0005,0,1,0,0.18);letter-spacing:0.5px;">25</span>
<span style="top:615px;font-size:7.8px;line-height:13px;color:#6e797a;left:1219.57px;transform-origin:4.59px 50%;transform:matrix(1.0000,0.0005,0,1,0,0.18);letter-spacing:0.5px;">26</span>
<span style="top:615px;font-size:7.8px;line-height:13px;color:#6e797a;left:1245.14px;transform-origin:4.59px 50%;transform:matrix(1.0000,0.0005,0,1,0,0.18);letter-spacing:0.5px;">27</span>
<span style="top:615px;font-size:7.8px;line-height:13px;color:#6e797a;left:1270.71px;transform-origin:4.59px 50%;transform:matrix(1.0000,0.0005,0,1,0,0.18);letter-spacing:0.5px;">28</span>
<span style="top:615px;font-size:7.8px;line-height:13px;color:#6e797a;left:1296.27px;transform-origin:4.59px 50%;transform:matrix(1.0000,0.0005,0,1,0,0.18);letter-spacing:0.5px;">29</span>
<span style="top:615px;font-size:7.8px;line-height:13px;color:#6e797a;left:1321.84px;transform-origin:4.59px 50%;transform:matrix(1.0000,0.0005,0,1,0,0.18);letter-spacing:0.5px;">30</span>
<span style="top:615px;font-size:7.8px;line-height:13px;color:#6e797a;left:1347.41px;transform-origin:4.59px 50%;transform:matrix(1.0000,0.0005,0,1,0,0.18);letter-spacing:0.5px;">31</span>
<span style="top:624px;font-size:7.6px;line-height:13px;color:#6e797a;left:576.98px;transform-origin:8.42px 50%;transform:matrix(0.9267,0.0005,0,1,0,0.71);letter-spacing:0.4px;">DEC</span>
<span style="top:651px;font-size:8.7px;line-height:14px;color:#515e5f;left:765.30px;transform-origin:0 50%;transform:matrix(1.0549,0.0005,0,1,0,0.19);">Twitter</span>
<span style="top:651px;font-size:8.7px;line-height:14px;color:#515e5f;left:820.30px;transform-origin:0 50%;transform:matrix(0.9907,0.0005,0,1,0,0.19);">Facebook</span>
<span style="top:651px;font-size:8.7px;line-height:14px;color:#515e5f;left:886.30px;transform-origin:0 50%;transform:matrix(1.0171,0.0005,0,1,0,0.19);">Instagram</span>
<span style="top:651px;font-size:8.7px;line-height:14px;color:#515e5f;left:954.00px;transform-origin:0 50%;transform:matrix(1.0195,0.0005,0,1,0,0.19);">LinkedIn</span>
<span style="top:651px;font-size:8.7px;line-height:14px;color:#515e5f;left:1015.60px;transform-origin:0 50%;transform:matrix(1.0088,0.0005,0,1,0,0.19);">TikTok</span>
<span style="top:651px;font-size:8.7px;line-height:14px;color:#515e5f;left:1069.00px;transform-origin:0 50%;transform:matrix(1.0147,0.0005,0,1,0,0.19);">Pinterest</span>
<span style="top:651px;font-size:8.7px;line-height:14px;color:#515e5f;left:1131.90px;transform-origin:0 50%;transform:matrix(0.9988,0.0005,0,1,0,0.19);">YouTube</span>
<span style="top:694px;font-size:8.0px;line-height:13px;color:#515e5f;left:504.20px;transform-origin:0 50%;transform:matrix(0.9453,0.0005,0,1,0,0.25);">Audience Metrics</span>
<span style="top:694px;font-size:8.0px;line-height:13px;color:#515e5f;left:1322.39px;transform-origin:100% 50%;transform:matrix(0.9088,0.0005,0,1,0,0.25);">Totals</span>
<span style="top:694px;font-size:8.0px;line-height:13px;color:#515e5f;left:1374.94px;transform-origin:100% 50%;transform:matrix(0.9101,0.0005,0,1,0,0.25);">% Change</span>
<span style="top:718px;font-size:12.5px;line-height:18px;color:#273333;left:504.10px;transform-origin:0 50%;transform:matrix(0.9138,0.0005,0,1,0,0.69);-webkit-text-stroke:0.12px #273333;">Total Audience</span>
<div style="left:504.5px;top:734.4px;width:74.3px;height:0px;border-top:1px dotted #c2c7c7;"></div>
<span style="top:719px;font-size:11.3px;line-height:16px;color:#273333;left:1302.46px;transform-origin:100% 50%;transform:matrix(0.9549,0.0005,0,1,0,0.98);-webkit-text-stroke:0.25px #273333;">351,869</span>
<svg style="left:1376.80px;top:722.55px;overflow:visible" width="9.3" height="9.3" viewBox="0 0 10 10"><path d="M1 9L9 1M3.2 1H9V6.8" fill="none" stroke="#0e7f80" stroke-width="1.51" stroke-linecap="butt" stroke-linejoin="miter"/></svg>
<span style="top:719px;font-size:11.3px;line-height:16px;color:#2a9393;left:1386.55px;transform-origin:100% 50%;transform:matrix(0.9165,0.0005,0,1,0,0.98);-webkit-text-stroke:0.2px #2a9393;">0.7%</span>
<span style="top:748px;font-size:12.5px;line-height:18px;color:#273333;left:504.10px;transform-origin:0 50%;transform:matrix(0.9155,0.0005,0,1,0,0.69);-webkit-text-stroke:0.12px #273333;">Total Net Audience Growth</span>
<div style="left:504.5px;top:764.4px;width:135.5px;height:0px;border-top:1px dotted #c2c7c7;"></div>
<span style="top:749px;font-size:11.3px;line-height:16px;color:#273333;left:1315.02px;transform-origin:100% 50%;transform:matrix(0.9476,0.0005,0,1,0,0.98);-webkit-text-stroke:0.25px #273333;">2,394</span>
<svg style="left:1370.80px;top:752.55px;overflow:visible" width="9.3" height="9.3" viewBox="0 0 10 10"><path d="M1 9L9 1M3.2 1H9V6.8" fill="none" stroke="#0e7f80" stroke-width="1.51" stroke-linecap="butt" stroke-linejoin="miter"/></svg>
<span style="top:749px;font-size:11.3px;line-height:16px;color:#2a9393;left:1380.25px;transform-origin:100% 50%;transform:matrix(0.9299,0.0005,0,1,0,0.98);-webkit-text-stroke:0.2px #2a9393;">12.4%</span>
<span style="top:778px;font-size:9.0px;line-height:14px;color:#515e5f;left:504.10px;transform-origin:0 50%;transform:matrix(0.9952,0.0005,0,1,0,0.29);">Twitter Net Follower Growth</span>
<span style="top:777px;font-size:8.8px;line-height:14px;color:#515e5f;left:1330.58px;transform-origin:100% 50%;transform:matrix(0.9828,0.0005,0,1,0,0.92);">-66</span>
<svg style="left:1379.50px;top:781.50px;overflow:visible" width="7" height="7" viewBox="0 0 10 10"><path d="M1 9L9 1M3.2 1H9V6.8" fill="none" stroke="#0e7f80" stroke-width="1.57" stroke-linecap="butt" stroke-linejoin="miter"/></svg>
<span style="top:777px;font-size:8.8px;line-height:14px;color:#2a9393;left:1387.35px;transform-origin:100% 50%;transform:matrix(0.9418,0.0005,0,1,0,0.92);">85.7%</span>
</section>
</div></div>
</body></html>
